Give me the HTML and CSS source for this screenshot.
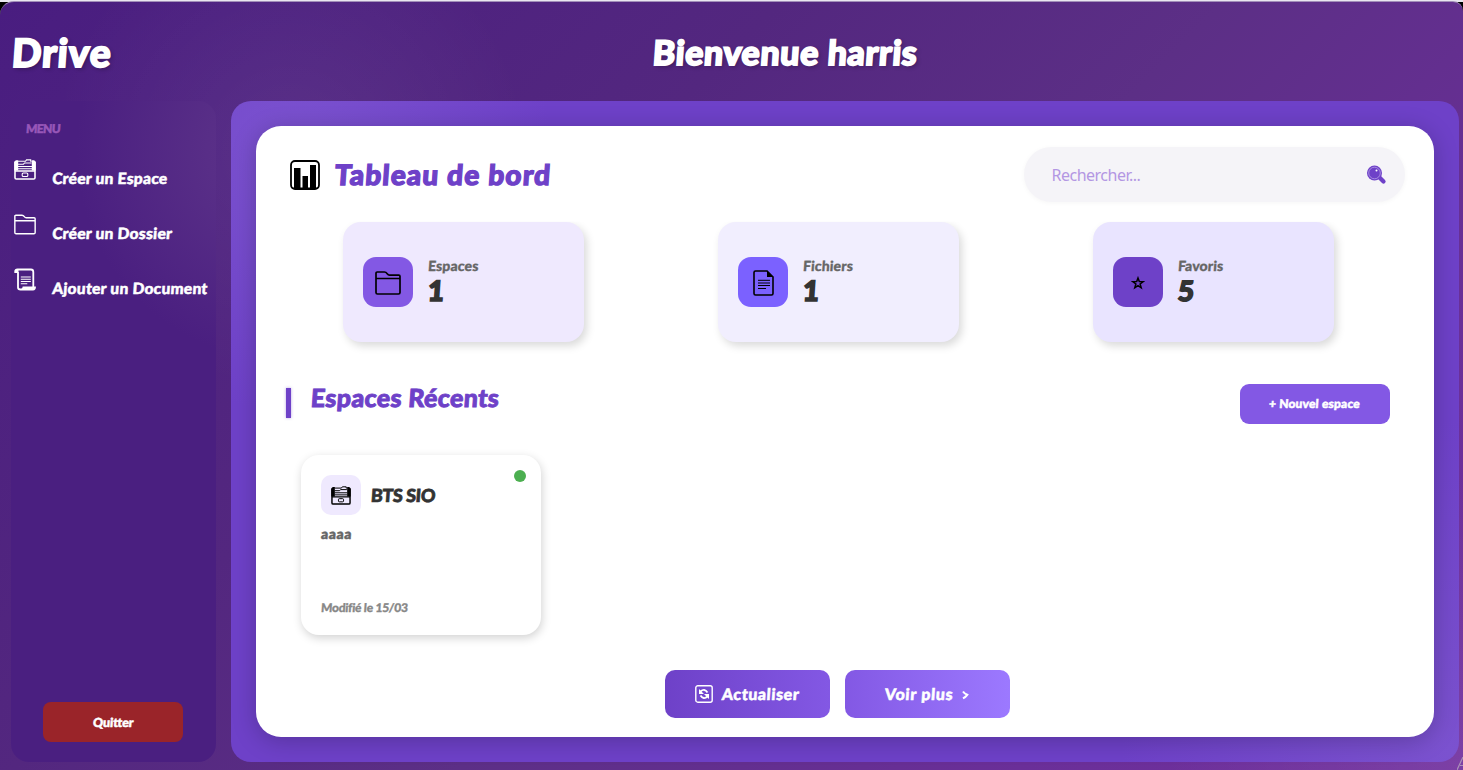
FILE: index.html
```html
<!DOCTYPE html>
<html lang="fr">
<head>
<meta charset="utf-8">
<title>Drive</title>
<link rel="stylesheet" href="styles.css">
</head>
<body>
<svg width="0" height="0" class="defs">
  <symbol id="cabinet" viewBox="0 0 22 21">
    <path d="M1 3v15.700a1.300 1.300 0 0 0 1.300 1.300h17.400a1.300 1.300 0 0 0 1.300-1.300V3M1 12h20" fill="none" stroke="currentColor" stroke-width="1.600"/>
    <path d="M.3 2.500L2 1.200h2.200V11.500H.3zM21.700 2.500L20 1.200h-2.200V11.500h3.900z" fill="currentColor"/>
    <path d="M4 2.300h7.500l1-1.400h4.200v1.400h1M4 5.200h5.500l1-1.200h7M4 7.500h14M4 9.800h14" fill="none" stroke="currentColor" stroke-width="1.100"/>
    <rect x="8.200" y="14" width="5.600" height="3.500" rx="1" fill="none" stroke="currentColor" stroke-width="1.100"/>
  </symbol>
  <symbol id="folder" viewBox="0 0 26 24">
    <path d="M1 21.500V2.200Q1 1 2.200 1h7.200Q11 1 12.200 2.700Q13.200 4.100 14.500 4.100h9.200Q25 4.100 25 5.300v16.200q0 1.500-1.500 1.500h-21Q1 23 1 21.500zM1 7.500h24" fill="none" stroke="currentColor" stroke-width="1.700"/>
  </symbol>
  <symbol id="scroll" viewBox="0 0 22 22">
    <path d="M4 3.500V19q0 2 2.500 2H19q2 0 2-2.200H9.500Q9.500 21 7 21M4 3.500H1.200Q1 1 3.500 1H17q2.300 0 2.300 2.500v15" fill="none" stroke="currentColor" stroke-width="1.800"/>
    <path d="M1 1.200h3.500v2.500H1zM9 18.500h12.200L20 21H8z" fill="currentColor"/>
    <path d="M6.800 8.500h10M6.800 10.800h10M6.800 13h10M6.800 15.200h6.500" stroke="currentColor" stroke-width="1.100"/>
  </symbol>
</svg>
<div class="window">
  <header class="topbar">
    <div class="brand t">Drive</div>
    <h1 class="welcome"><span class="t">Bienvenue harris</span></h1>
  </header>
  <div class="main">
    <nav class="sidebar">
      <div class="menu-title t">MENU</div>
      <a class="menu-item"><svg class="menu-icon"><use href="#cabinet"/></svg><span class="t">Créer un Espace</span></a>
      <a class="menu-item"><svg class="menu-icon folder"><use href="#folder"/></svg><span class="t">Créer un Dossier</span></a>
      <a class="menu-item"><svg class="menu-icon"><use href="#scroll"/></svg><span class="t">Ajouter un Document</span></a>
      <button class="quit"><span class="t">Quitter</span></button>
    </nav>
    <section class="panel">
      <div class="sheet">
        <div class="head">
          <svg class="chart" viewBox="0 0 30 30"><rect x="1" y="1" width="28" height="28" rx="4" fill="none" stroke="#000" stroke-width="1.800"/><path d="M4 8h6.500v20H4zM12.500 16H18v12h-5.500zM20 5h6v23h-6zM2 27.500h26V29H2z"/></svg>
          <h2 class="title t">Tableau de bord</h2>
          <div class="search"><span class="placeholder">Rechercher...</span>
            <svg class="loupe" viewBox="0 0 20 20"><path d="M12.500 12.500l4 4" stroke="#6e41c8" stroke-width="4.200" stroke-linecap="round"/><circle cx="7.500" cy="8" r="7.500" fill="#6e41c8"/><circle cx="7.500" cy="8" r="5.800" fill="none" stroke="#bfabea" stroke-width=".7"/><circle cx="9.500" cy="5.600" r="1" fill="#fff"/></svg>
          </div>
        </div>
        <div class="stats">
          <div class="stat s-one"><div class="tile"><svg width="26" height="24"><use href="#folder"/></svg></div><div><div class="label t">Espaces</div><div class="num t">1</div></div></div>
          <div class="stat s-two"><div class="tile"><svg width="21" height="26" viewBox="0 0 21 26"><path d="M2.500 1H14l6 6v16.500q0 1.500-1.500 1.500h-16Q1 25 1 23.500v-21Q1 1 2.500 1z" fill="none" stroke="#000" stroke-width="1.600"/><path d="M14 .5V7h6.500z"/><path d="M5 10.300h12M5 13h12M5 15.500h12M5 18.500h8" stroke="#000" stroke-width="1"/></svg></div><div><div class="label t">Fichiers</div><div class="num t">1</div></div></div>
          <div class="stat s-three"><div class="tile"><svg width="14" height="14" viewBox="0 0 14 14"><path d="M7 2l1.300 3.500 3.900.1L9.100 8l1.100 3.800L7 9.600l-3.200 2.200L4.900 8 1.800 5.600l3.900-.1z" fill="none" stroke="#000" stroke-width="1.500"/></svg></div><div><div class="label t">Favoris</div><div class="num t">5</div></div></div>
        </div>
        <div class="section-head">
          <i class="bar"></i>
          <h3 class="section-title t">Espaces Récents</h3>
          <button class="new"><span class="t">+ Nouvel espace</span></button>
        </div>
        <article class="space">
          <i class="dot"></i>
          <div class="space-head"><div class="mini"><svg width="20" height="19"><use href="#cabinet"/></svg></div><h4 class="space-name t">BTS SIO</h4></div>
          <p class="desc t">aaaa</p>
          <div class="date t">Modifié le 15/03</div>
        </article>
        <div class="actions">
          <button class="act refresh"><svg width="18" height="18" viewBox="0 0 18 18"><rect x=".8" y=".8" width="16.400" height="16.400" rx="2" fill="none" stroke="#fff" stroke-width="1.400"/><path d="M5.500 6.500Q9.500 3 12.500 7.500M12.500 11.500Q8.500 15 5.500 10.500" fill="none" stroke="#fff" stroke-width="1.800"/><path d="M4 4v5h5zM14 14V9H9z" fill="#fff"/></svg><span class="t">Actualiser</span></button>
          <button class="act more"><span class="t">Voir plus</span><svg class="chevron" width="7" height="10" viewBox="0 0 7 10"><path d="M1 1.500Q2.500 3.700 5.200 4.800Q3.800 6.800 1 8.400" fill="none" stroke="#fff" stroke-width="2.100"/></svg></button>
        </div>
      </div>
    </section>
  </div>
  <svg class="corner" viewBox="0 0 6 13"><path d="M0 13L6 0M3 8.500h3" stroke="#ab91b8" stroke-width="1.200" fill="none"/></svg>
</div>
</body>
</html>
```
FILE: styles.css
```css
* { box-sizing: border-box; margin: 0; padding: 0; }
body { width: 1463px; height: 770px; overflow: hidden; background: linear-gradient(#e9e6f0 0 2px, #000 2px); font-family: Lato, "Open Sans", sans-serif; font-weight: 900; padding-top: 1px; }
button { border: 0; font: inherit; color: #fff; }
.t { display: inline-block; transform: skewX(-4deg); width: max-content; -webkit-text-stroke: .5px currentColor; }
.defs { position: absolute; }
.window { position: relative; height: 769px; border-top: 1px solid #a28fb9; border-radius: 14px 10px 0 0; overflow: hidden;
  background: radial-gradient(circle at 290px 150px, rgba(255,255,255,.065), transparent 240px), radial-gradient(circle at 1463px 769px, rgba(255,255,255,.08), transparent 300px), linear-gradient(135deg, #491d80 0%, #53277f 35%, #5c2f86 55%, #6a2f98 80%, #71309e 100%); }
.topbar { height: 99px; display: grid; grid-template-columns: 231px 1fr; color: #fff; text-shadow: 2px 2px 4px rgba(0,0,0,.3); }
.brand { margin-left: 12px; font-size: 39px; line-height: 100px; letter-spacing: .9px; -webkit-text-stroke-width: 1.8px; }
.welcome { padding-left: 422px; font-size: 34px; font-weight: 900; line-height: 100px; white-space: nowrap; }
.welcome .t { letter-spacing: .6px; -webkit-text-stroke-width: 1.8px; }
.main { display: flex; gap: 15px; padding-left: 11px; height: 661px; }
.sidebar { width: 205px; border-radius: 18px; display: flex; flex-direction: column; padding-top: 20px; background: radial-gradient(circle at 275px 50px, #5a3088 60px, #4a1f80 210px); }
.menu-title { color: #9857b8; font-size: 12px; line-height: 16px; margin: 0 0 15px 15px; letter-spacing: -.6px; }
.menu-item { height: 55px; display: flex; gap: 16px; padding: 6px 0 0 3px; color: #fff; font-size: 15.5px; line-height: 41px; white-space: nowrap; letter-spacing: .28px; }
.menu-icon { width: 22px; height: 23px; flex: none; }
.quit { width: 140px; height: 40px; margin: auto auto 20px 32px; border-radius: 8px; background: #9a2429; font-size: 12.5px; padding-top: 1px; }
.panel { width: 1228px; border-radius: 20px; padding: 25px; background: radial-gradient(circle at 60px 50px, #7b52cf, transparent 260px), radial-gradient(circle at 1220px 650px, #7b52cf, transparent 330px), #6e41c8; }
.sheet { width: 1177.500px; height: 611px; border-radius: 25px; background: #fff; box-shadow: 0 4px 24px rgba(0,0,0,.22); padding: 20px 20px 0; }
.head { height: 56px; display: flex; align-items: center; padding: 0 9px 0 14px; }
.chart { width: 30px; height: 30px; margin: 1px 15px 0 0; }
.title { color: #6e41c8; font-size: 28px; font-weight: 900; letter-spacing: 1.150px; -webkit-text-stroke-width: 1.3px; white-space: nowrap; }
.search { margin-left: auto; width: 381px; height: 55px; border-radius: 28px; background: #f5f4f8; display: flex; align-items: center; justify-content: space-between; padding: 0 18px 0 28px; box-shadow: 0 1px 5px rgba(0,0,0,.04); }
.placeholder { font: normal 400 16px "Noto Sans", sans-serif; color: #b397e3; letter-spacing: -.5px; padding-top: 2px; }
.loupe { width: 20px; height: 20px; margin-top: 1px; }
.stats { height: 130px; margin-top: 19.500px; display: flex; justify-content: space-around; width: 1125px; }
.stat { width: 241px; height: 120px; border-radius: 18px; display: flex; align-items: center; gap: 15px; padding-left: 20px; box-shadow: 3px 4px 8px rgba(0,0,0,.15); clip-path: inset(0 -12px -14px -12px); }
.s-one { background: #efe9fe; } .s-two { background: #f1eefe; } .s-three { background: #e9e4ff; }
.tile { width: 50px; height: 50px; border-radius: 13px; display: grid; place-items: center; padding-top: 3px; background: #8358e4; color: #000; }
.s-two .tile { background: #7b61ff; } .s-three .tile { background: #6e41c8; }
.label { display: block; color: #666; font-size: 14px; line-height: 18px; letter-spacing: .15px; -webkit-text-stroke-width: .3px; }
.num { display: block; color: #333; font-size: 28px; line-height: 33px; margin-top: -1px; -webkit-text-stroke-width: 1.6px; }
.section-head { height: 76px; margin-top: 32px; padding: 0 24px 0 10px; display: flex; align-items: flex-start; }
.bar { width: 5px; height: 30px; margin-top: 4px; background: #6e41c8; box-shadow: 0 0 3px rgba(110,65,200,.5); }
.section-title { margin-left: 20px; color: #6e41c8; font-size: 25px; font-weight: 900; line-height: 26px; letter-spacing: .35px; -webkit-text-stroke-width: .9px; }
.new { margin-left: auto; width: 150px; height: 40px; border-radius: 9px; background: #8358e4; font-size: 12px; letter-spacing: .2px; }
.space { position: relative; margin: -5px 0 0 25px; width: 240px; height: 180px; border-radius: 18px; background: #fff; box-shadow: 1px 3px 10px rgba(0,0,0,.18); padding: 20px; display: flex; flex-direction: column; }
.dot { position: absolute; top: 15px; right: 15px; width: 12px; height: 12px; border-radius: 50%; background: #4caf50; }
.space-head { display: flex; align-items: center; gap: 10px; }
.mini { width: 40px; height: 40px; border-radius: 10px; background: #efe9fe; display: grid; place-items: center; color: #000; padding-top: 2px; }
.space-name { color: #333; font-size: 18px; font-weight: 900; letter-spacing: -.4px; -webkit-text-stroke-width: .7px; }
.desc { color: #666; font-size: 14px; line-height: 18px; margin-top: 10px; letter-spacing: .6px; }
.date { color: #888; font-size: 12px; line-height: 14px; margin-top: auto; letter-spacing: -.25px; -webkit-text-stroke-width: .3px; }
.actions { display: flex; justify-content: center; gap: 15px; margin-top: 35px; padding-right: 15px; }
.act { width: 165px; height: 48px; border-radius: 10px; display: flex; justify-content: center; align-items: center; gap: 9px; font-size: 16px; letter-spacing: .55px; }
.more { letter-spacing: .7px; }
.more .t { margin-top: -1px; }
.chevron { margin-top: 3px; }
.refresh { background: linear-gradient(90deg, #6e41c8, #8358e4); }
.more { background: linear-gradient(90deg, #8358e4, #9c79ff); }
.corner { position: absolute; right: 0; bottom: 0; width: 6px; height: 13px; }
```
